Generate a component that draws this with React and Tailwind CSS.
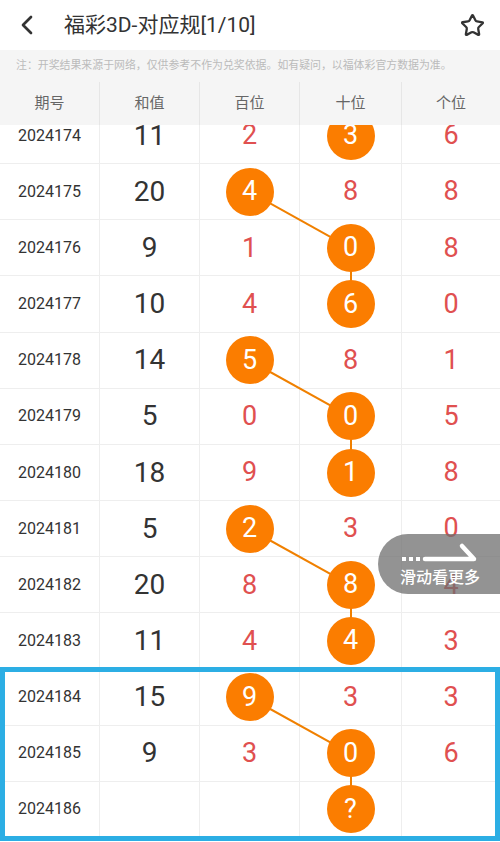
import { ChevronLeft, Star } from 'lucide-react'

const H = 56.17
const rows = [
  { no: '2024174', sum: '11', d: ['2', '3', '6'], ball: 1 },
  { no: '2024175', sum: '20', d: ['4', '8', '8'], ball: 0 },
  { no: '2024176', sum: '9', d: ['1', '0', '8'], ball: 1 },
  { no: '2024177', sum: '10', d: ['4', '6', '0'], ball: 1 },
  { no: '2024178', sum: '14', d: ['5', '8', '1'], ball: 0 },
  { no: '2024179', sum: '5', d: ['0', '0', '5'], ball: 1 },
  { no: '2024180', sum: '18', d: ['9', '1', '8'], ball: 1 },
  { no: '2024181', sum: '5', d: ['2', '3', '0'], ball: 0 },
  { no: '2024182', sum: '20', d: ['8', '8', '4'], ball: 1 },
  { no: '2024183', sum: '11', d: ['4', '4', '3'], ball: 1 },
  { no: '2024184', sum: '15', d: ['9', '3', '3'], ball: 0 },
  { no: '2024185', sum: '9', d: ['3', '0', '6'], ball: 1 },
  { no: '2024186', sum: '', d: ['', '?', ''], ball: 1 },
]

// pairs of row indexes joined by a line
const links = [[1, 2], [2, 3], [4, 5], [5, 6], [7, 8], [8, 9], [10, 11], [11, 12]]
const cx = (i) => (rows[i].ball === 0 ? 250 : 351)
const cy = (i) => i * H + H / 2

const cols = 'grid grid-cols-[100px_100px_100px_102px_98px]'

function Ball({ v }){
  return (
    <div className="relative z-10 w-[48px] h-[48px] rounded-full bg-[#fb7d00] text-white flex items-center justify-center text-[27px] leading-none">
      {v}
    </div>
  )
}

export default function App(){
  return (
    <div className="relative w-[500px] h-[842px] overflow-hidden bg-white font-['Roboto','Noto_Sans_CJK_SC',sans-serif]">
      <div className="h-[50px] flex items-center px-3">
        <ChevronLeft size={32} strokeWidth={2} className="text-[#333] -ml-[1px]" />
        <h1 className="ml-[21px] text-[21px] text-[#333] flex-1 pt-[1px]">福彩3D-对应规[1/10]</h1>
        <Star size={25} strokeWidth={2.2} className="text-[#333] mr-[3px]" />
      </div>
      <div className="bg-[#f5f5f5]">
        <p className="h-[32px] flex items-center pl-[16px] text-[10.9px] text-[#bbb] whitespace-nowrap">注：开奖结果来源于网络，仅供参考不作为兑奖依据。如有疑问，以福体彩官方数据为准。</p>
        <div className={`${cols} h-[43px] text-[15px] text-[#666]`}>
          {['期号', '和值', '百位', '十位', '个位'].map((t, i) => (
            <div key={t} className={`flex items-center justify-center ${i < 4 ? 'border-r border-[#e6e6e6]' : ''}`}>{t}</div>
          ))}
        </div>
      </div>
      <div className="relative h-[717px] overflow-hidden">
        <div className="relative -mt-[17px]">
          <svg className="absolute left-0 top-0 z-[5]" width="500" height={rows.length * H}>
            {links.map(([a, b]) => (
              <line key={a} x1={cx(a)} y1={cy(a)} x2={cx(b)} y2={cy(b)} stroke="#f08000" strokeWidth="2" />
            ))}
          </svg>
          {rows.map((r, i) => (
            <div key={r.no} className={`${cols} border-b border-[#eeeeee]`} style={{ height: H }}>
              <div className="flex items-center justify-center border-r border-[#eeeeee] text-[16px] text-[#333]">{r.no}</div>
              <div className="flex items-center justify-center border-r border-[#eeeeee] text-[28px] text-[#333]">{r.sum}</div>
              {r.d.map((v, k) => (
                <div key={k} className={`flex items-center justify-center text-[27px] text-[#e05050] ${k < 2 ? 'border-r border-[#eeeeee]' : ''}`}>
                  {k === r.ball ? <Ball v={v} /> : v}
                </div>
              ))}
            </div>
          ))}
        </div>
      </div>

      <div className="absolute left-0 top-[667px] w-[500px] h-[174px] border-[5px] border-[#2caee4] z-20 pointer-events-none" />

      <div className="absolute right-0 top-[534px] w-[122px] h-[60px] rounded-l-full bg-[#6f6f6f]/75 z-30 flex flex-col items-start pl-[22px] pt-[8px]">
        <svg width="78" height="20" viewBox="0 0 78 20">
          <rect x="2" y="15" width="4" height="4" fill="#fff" />
          <rect x="9" y="15" width="4" height="4" fill="#fff" />
          <rect x="16" y="15" width="4" height="4" fill="#fff" />
          <path d="M25 17 H74 L62 4" fill="none" stroke="#fff" strokeWidth="4.5" strokeLinejoin="round" strokeLinecap="round" />
        </svg>
        <span className="mt-[8px] text-[16px] font-medium text-white leading-none">滑动看更多</span>
      </div>
    </div>
  )
}
